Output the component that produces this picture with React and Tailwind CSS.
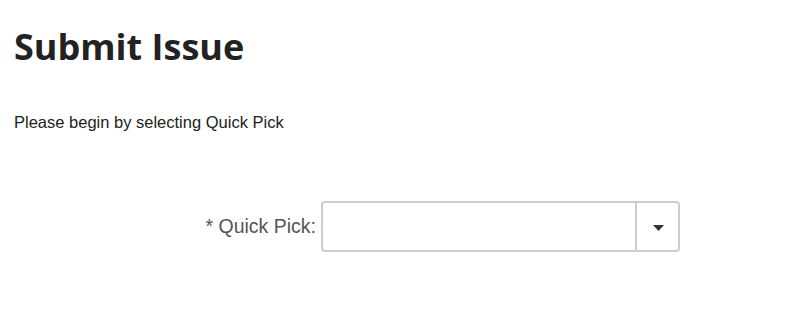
export default function App() {
  return (
    <div className="w-[787px] h-[326px] bg-white overflow-hidden">
      <h1
        className="pl-[14px] pt-[27px] text-[36px] leading-[1.1] font-bold text-[#222222]"
        style={{ fontFamily: '"Open Sans", sans-serif' }}
      >
        Submit Issue
      </h1>
      <p
        className="pl-[14px] mt-[46px] text-[16.5px] leading-[1.2] text-[#222222]"
        style={{ fontFamily: '"Liberation Sans", Arial, sans-serif' }}
      >
        Please begin by selecting Quick Pick
      </p>
      <div className="mt-[69px] flex items-center pl-[14px]">
        <label
          className="w-[307px] pr-[5px] text-right text-[19.5px] text-[#555555]"
          style={{ fontFamily: '"Liberation Sans", Arial, sans-serif' }}
        >
          * Quick Pick:
        </label>
        <div className="flex w-[359px] h-[51px] border-2 border-[#cccccc] rounded-[4px] bg-white">
          <div className="flex-1" />
          <div className="w-[43px] border-l-2 border-[#cccccc] flex items-center justify-center">
            <svg width="11" height="6" viewBox="0 0 11 6" className="mt-[2px] ml-[1px]">
              <polygon points="0,0 11,0 5.5,6" fill="#333333" />
            </svg>
          </div>
        </div>
      </div>
    </div>
  );
}
